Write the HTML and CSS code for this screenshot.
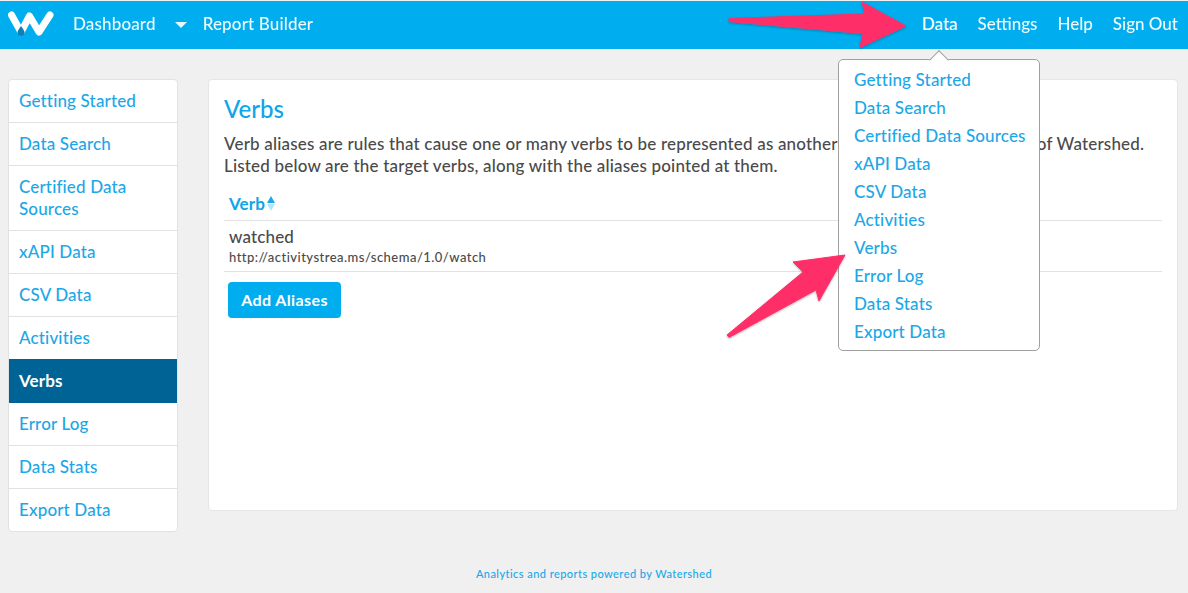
FILE: index.html
```html
<!DOCTYPE html>
<html lang="en">
<head>
<meta charset="utf-8">
<title>Verbs</title>
<link rel="stylesheet" href="styles.css">
</head>
<body>
<header class="topbar">
  <svg class="logo" width="46" height="26" viewBox="0 0 46 26" aria-hidden="true">
    <path d="M3.500 4 L13 21 L21.500 5 L31 21 L42 4" fill="none" stroke="#fff" stroke-width="7" stroke-linecap="round" stroke-linejoin="round"/>
    <path d="M13 15 C15 18 16.500 19.500 16.500 21.500 A3.500 3.500 0 0 1 9.500 21.500 C9.500 19.500 11 18 13 15Z" fill="#0f7fb8"/>
  </svg>
  <nav class="nav-left">
    <a class="nav-link">Dashboard</a>
    <span class="caret"></span>
    <a class="nav-link">Report Builder</a>
  </nav>
  <nav class="nav-right">
    <a class="nav-link active">Data</a>
    <a class="nav-link">Settings</a>
    <a class="nav-link">Help</a>
    <a class="nav-link">Sign Out</a>
  </nav>
</header>

<div class="layout">
  <aside class="sidebar">
    <a class="side-item">Getting Started</a>
    <a class="side-item">Data Search</a>
    <a class="side-item">Certified Data Sources</a>
    <a class="side-item">xAPI Data</a>
    <a class="side-item">CSV Data</a>
    <a class="side-item">Activities</a>
    <a class="side-item current">Verbs</a>
    <a class="side-item">Error Log</a>
    <a class="side-item">Data Stats</a>
    <a class="side-item">Export Data</a>
  </aside>
  <main class="panel">
    <h1 class="title">Verbs</h1>
    <p class="intro">Verb aliases are rules that cause one or many verbs to be represented as another verb within the reporting of Watershed.<br>Listed below are the target verbs, along with the aliases pointed at them.</p>
    <div class="table-head">Verb<span class="sort"><i class="up"></i><i class="down"></i></span></div>
    <div class="table-row">
      <div class="verb-name">watched</div>
      <div class="verb-id">http://activitystrea.ms/schema/1.0/watch</div>
    </div>
    <button class="btn">Add Aliases</button>
  </main>
</div>

<footer class="footer">Analytics and reports powered by Watershed</footer>

<div class="dropdown">
  <a class="drop-item">Getting Started</a>
  <a class="drop-item">Data Search</a>
  <a class="drop-item">Certified Data Sources</a>
  <a class="drop-item">xAPI Data</a>
  <a class="drop-item">CSV Data</a>
  <a class="drop-item">Activities</a>
  <a class="drop-item">Verbs</a>
  <a class="drop-item">Error Log</a>
  <a class="drop-item">Data Stats</a>
  <a class="drop-item">Export Data</a>
</div>

<svg class="arrows" width="1188" height="593" viewBox="0 0 1188 593" aria-hidden="true">
  <defs>
    <filter id="sh" x="-10%" y="-10%" width="120%" height="130%">
      <feDropShadow dx="0" dy="1" stdDeviation="1.200" flood-color="#000" flood-opacity=".28"/>
    </filter>
  </defs>
  <path filter="url(#sh)" fill="#fe2f68" stroke="#fe2f68" stroke-width="1" stroke-linejoin="round" d="M729 18.500 L865 14 L862 2 L906 26 L860 47.500 L863 33.500 L729 21.500 Z"/>
  <path filter="url(#sh)" fill="#fe2f68" stroke="#fe2f68" stroke-width="1" stroke-linejoin="round" d="M845 255 L819 301 L816 290 L729 337.500 L727 335 L803 272 L793 262 Z"/>
</svg>
</body>
</html>
```
FILE: styles.css
```css
* { box-sizing: border-box; }
html, body { margin: 0; padding: 0; }
body {
  position: relative;
  height: 593px;
  overflow: hidden;
  background: #f0f0f0;
  padding-top: 1px;
  font-family: "Lato", "Noto Sans", sans-serif;
  font-size: 17px;
  font-weight: 500;
  letter-spacing: .15px;
  color: #4a4a4a;
}
.topbar {
  display: flex;
  align-items: center;
  height: 48px;
  background: #00adee;
  color: #fff;
  padding: 0 10px 4px 8px;
}
.logo { flex: none; margin-top: 1px; }
.nav-left { display: flex; align-items: center; margin-left: 19px; }
.nav-right { display: flex; align-items: center; gap: 20px; margin-left: auto; letter-spacing: 0; }
.nav-link { color: #fff; font-size: 17px; font-weight: 500; white-space: nowrap; opacity: .94; }
.nav-link.active { opacity: 1; }
.caret {
  width: 0; height: 0;
  margin: 3px 16px 0 19px;
  border-left: 6px solid transparent;
  border-right: 6px solid transparent;
  border-top: 6px solid #e6f7fe;
}
.layout {
  display: flex;
  align-items: flex-start;
  gap: 30px;
  padding: 30px 10px 0 8px;
}
.sidebar {
  flex: none;
  width: 170px;
  background: #fff;
  border: 1px solid #e2e2e2;
  border-radius: 4px;
  overflow: hidden;
}
.side-item {
  display: block;
  padding: 10px;
  line-height: 22px;
  color: #1ba7e8;
  border-bottom: 1px solid #e2e2e2;
}
.side-item:last-child { border-bottom: 0; }
.side-item.current { margin-top: -1px; padding-top: 11px; padding-bottom: 11px; background: #006395; color: #fff; font-weight: 700; border-bottom: 0; }
.panel {
  flex: 1;
  height: 432px;
  background: #fff;
  border: 1px solid #e6e6e6;
  border-radius: 4px;
  padding: 14px 15px 0 15px;
}
.title { margin: 0; font-size: 24px; line-height: 30px; font-weight: 500; letter-spacing: 0; color: #0ea5ea; }
.intro { margin: 9px 0 0; line-height: 22px; color: #4a4a4a; white-space: nowrap; letter-spacing: .18px; }
.table-head {
  display: flex;
  align-items: center;
  height: 33px;
  margin-top: 11px;
  padding: 0 5px 1px;
  color: #0ea5ea;
  font-weight: 700;
  border-bottom: 1px solid #e2e2e2;
}
.sort { display: inline-flex; flex: none; flex-direction: column; gap: 1px; margin-left: 2px; }
.sort i { display: block; width: 0; height: 0; border-left: 4.500px solid transparent; border-right: 4.500px solid transparent; }
.sort .up { border-bottom: 7px solid #1ba7e8; }
.sort .down { border-top: 7px solid #b4e4f9; }
.table-row {
  height: 51px;
  padding: 5px 5px 0;
  border-bottom: 1px solid #e2e2e2;
}
.verb-name { line-height: 22px; }
.verb-id { font-size: 13px; line-height: 18px; letter-spacing: .47px; }
.btn {
  display: block;
  height: 36px;
  width: 113px;
  margin: 10px 0 0 4px;
  padding: 0 0 2px;
  border: 0;
  border-radius: 4px;
  background: #00adee;
  color: #fff;
  font: 700 16px "Lato", "Noto Sans", sans-serif;
  letter-spacing: .4px;
}
.footer {
  position: absolute;
  left: 0; right: 0;
  top: 567px;
  text-align: center;
  font-size: 11px;
  line-height: 14px;
  letter-spacing: .44px;
  color: #1ba7e8;
}
.dropdown {
  position: absolute;
  left: 838px;
  top: 59px;
  width: 202px;
  height: 292px;
  padding: 6px 0 0 15px;
  background: #fff;
  border: 1px solid #a0a0a0;
  border-radius: 5px;
}
.dropdown::before {
  content: "";
  position: absolute;
  left: 93px;
  top: -7px;
  width: 13px;
  height: 13px;
  background: #fff;
  border-left: 1px solid #a0a0a0;
  border-top: 1px solid #a0a0a0;
  transform: rotate(45deg);
}
.drop-item { position: relative; display: block; height: 28px; line-height: 28px; color: #1ba7e8; white-space: nowrap; }
.arrows { position: absolute; left: 0; top: 0; pointer-events: none; }
```
